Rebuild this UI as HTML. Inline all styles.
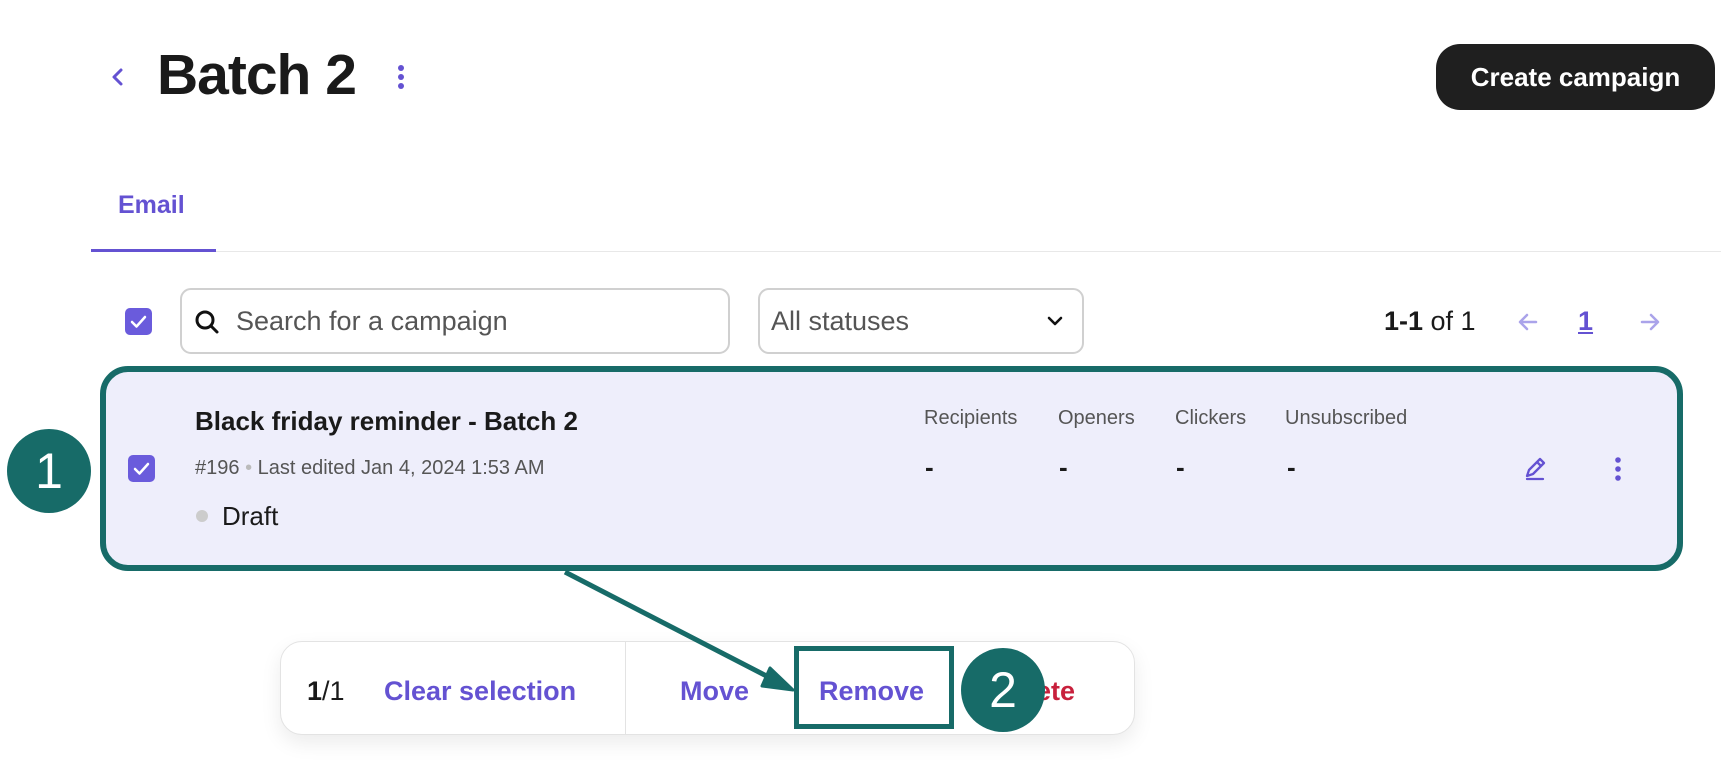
<!DOCTYPE html>
<html><head><meta charset="utf-8"><style>
*{margin:0;padding:0;box-sizing:border-box}
body{width:1730px;height:770px;background:#fff;font-family:"Liberation Sans",Arial,sans-serif;position:relative;overflow:hidden;color:#1a1a1a}
.a{position:absolute;white-space:nowrap}
.purple{color:#6452d2}
.cb{position:absolute;width:27px;height:27px;background:#6a5bdc;border-radius:5px}
.lbl{font-size:20px;color:#555;top:407px}
.dash{font-size:26px;font-weight:bold;top:452px}
</style></head><body>
<svg class="a" style="left:110px;top:66px" width="16" height="22" viewBox="0 0 16 22"><path d="M11 4L4 11l7 7" fill="none" stroke="#6452d2" stroke-width="3" stroke-linecap="round" stroke-linejoin="round"/></svg>
<div class="a" style="left:157px;top:42px;font-size:57px;font-weight:bold;letter-spacing:-1px">Batch 2</div>
<svg class="a" style="left:395px;top:64px" width="12" height="26"><circle cx="6" cy="4" r="3" fill="#6452d2"/><circle cx="6" cy="13" r="3" fill="#6452d2"/><circle cx="6" cy="22" r="3" fill="#6452d2"/></svg>
<div class="a" style="left:1436px;top:44px;width:279px;height:66px;background:#1f1f1f;border-radius:24px;color:#fff;font-size:26px;font-weight:bold;text-align:center;line-height:66px">Create campaign</div>
<div class="a purple" style="left:118px;top:191px;font-size:25px;font-weight:bold">Email</div>
<div class="a" style="left:91px;top:251px;width:1630px;height:1px;background:#e8e8e8"></div>
<div class="a" style="left:91px;top:249px;width:125px;height:3px;background:#6452d2"></div>
<div class="cb" style="left:125px;top:308px"><svg width="27" height="27"><path d="M7 14l4.5 4.5L20 9" fill="none" stroke="#fff" stroke-width="2.5" stroke-linecap="round" stroke-linejoin="round"/></svg></div>
<div class="a" style="left:180px;top:288px;width:550px;height:66px;border:2px solid #d0d0d0;border-radius:11px"></div>
<svg class="a" style="left:194px;top:309px" width="26" height="26"><circle cx="11" cy="11" r="8" fill="none" stroke="#111" stroke-width="3"/><path d="M17 17l6 6" stroke="#111" stroke-width="3" stroke-linecap="round"/></svg>
<div class="a" style="left:236px;top:306px;font-size:27px;color:#555">Search for a campaign</div>
<div class="a" style="left:758px;top:288px;width:326px;height:66px;border:2px solid #d0d0d0;border-radius:11px"></div>
<div class="a" style="left:771px;top:306px;font-size:27px;color:#555">All statuses</div>
<svg class="a" style="left:1046px;top:314px" width="18" height="14"><path d="M3 4l6 6 6-6" fill="none" stroke="#111" stroke-width="2.6" stroke-linecap="round" stroke-linejoin="round"/></svg>
<div class="a" style="left:1384px;top:306px;font-size:27px"><b>1-1</b> of 1</div>
<svg class="a" style="left:1516px;top:310px" width="24" height="24"><path d="M20 12H5M11 5l-7 7 7 7" fill="none" stroke="#aaa3ea" stroke-width="2.5" stroke-linecap="round" stroke-linejoin="round"/></svg>
<div class="a purple" style="left:1578px;top:306px;font-size:27px;font-weight:bold;text-decoration:underline">1</div>
<svg class="a" style="left:1638px;top:310px" width="24" height="24"><path d="M4 12h15M13 5l7 7-7 7" fill="none" stroke="#aaa3ea" stroke-width="2.5" stroke-linecap="round" stroke-linejoin="round"/></svg>
<div class="a" style="left:100px;top:366px;width:1583px;height:205px;background:#eeeefb;border:6px solid #176b68;border-radius:28px"></div>
<div class="a" style="left:7px;top:429px;width:84px;height:84px;border-radius:50%;background:#176b68;color:#fff;font-size:50px;text-align:center;line-height:84px">1</div>
<div class="cb" style="left:128px;top:455px"><svg width="27" height="27"><path d="M7 14l4.5 4.5L20 9" fill="none" stroke="#fff" stroke-width="2.5" stroke-linecap="round" stroke-linejoin="round"/></svg></div>
<div class="a" style="left:195px;top:406px;font-size:26px;font-weight:bold">Black friday reminder - Batch 2</div>
<div class="a" style="left:195px;top:457px;font-size:20px;color:#555">#196 <span style="color:#bbb">•</span> Last edited Jan 4, 2024 1:53 AM</div>
<div class="a" style="left:196px;top:510px;width:12px;height:12px;border-radius:50%;background:#ccc"></div>
<div class="a" style="left:222px;top:501px;font-size:26px">Draft</div>
<div class="a lbl" style="left:924px">Recipients</div>
<div class="a lbl" style="left:1058px">Openers</div>
<div class="a lbl" style="left:1175px">Clickers</div>
<div class="a lbl" style="left:1285px">Unsubscribed</div>
<div class="a dash" style="left:925px">-</div>
<div class="a dash" style="left:1059px">-</div>
<div class="a dash" style="left:1176px">-</div>
<div class="a dash" style="left:1287px">-</div>
<svg class="a" style="left:1522px;top:455px" width="28" height="28"><path d="M5 21l2-6 11-11 4 4-11 11z M15 7l4 4 M5 24h16" fill="none" stroke="#6452d2" stroke-width="2.3" stroke-linejoin="round" stroke-linecap="round"/></svg>
<svg class="a" style="left:1612px;top:456px" width="12" height="26"><circle cx="6" cy="4" r="2.8" fill="#6452d2"/><circle cx="6" cy="13" r="2.8" fill="#6452d2"/><circle cx="6" cy="22" r="2.8" fill="#6452d2"/></svg>
<div class="a" style="left:280px;top:641px;width:855px;height:94px;background:#fff;border:1px solid #e3e3e3;border-radius:22px;box-shadow:0 8px 20px rgba(0,0,0,.08)"></div>
<div class="a" style="left:625px;top:642px;width:1px;height:92px;background:#e3e3e3"></div>
<div class="a" style="left:307px;top:676px;font-size:27px"><b>1</b>/1</div>
<div class="a purple" style="left:384px;top:676px;font-size:27px;font-weight:bold">Clear selection</div>
<div class="a purple" style="left:680px;top:676px;font-size:27px;font-weight:bold">Move</div>
<div class="a purple" style="left:819px;top:676px;font-size:27px;font-weight:bold">Remove</div>
<div class="a" style="left:994px;top:676px;font-size:27px;font-weight:bold;color:#c8203c">Delete</div>
<div class="a" style="left:794px;top:646px;width:160px;height:83px;border:5px solid #176b68"></div>
<div class="a" style="left:961px;top:648px;width:84px;height:84px;border-radius:50%;background:#176b68;color:#fff;font-size:50px;text-align:center;line-height:84px">2</div>
<svg class="a" style="left:0;top:0" width="1730" height="770"><path d="M565 572L782 684" stroke="#176b68" stroke-width="5"/><path d="M793 690L770 668L762 686z" fill="#176b68" stroke="#176b68" stroke-width="3" stroke-linejoin="round"/></svg>
</body></html>
